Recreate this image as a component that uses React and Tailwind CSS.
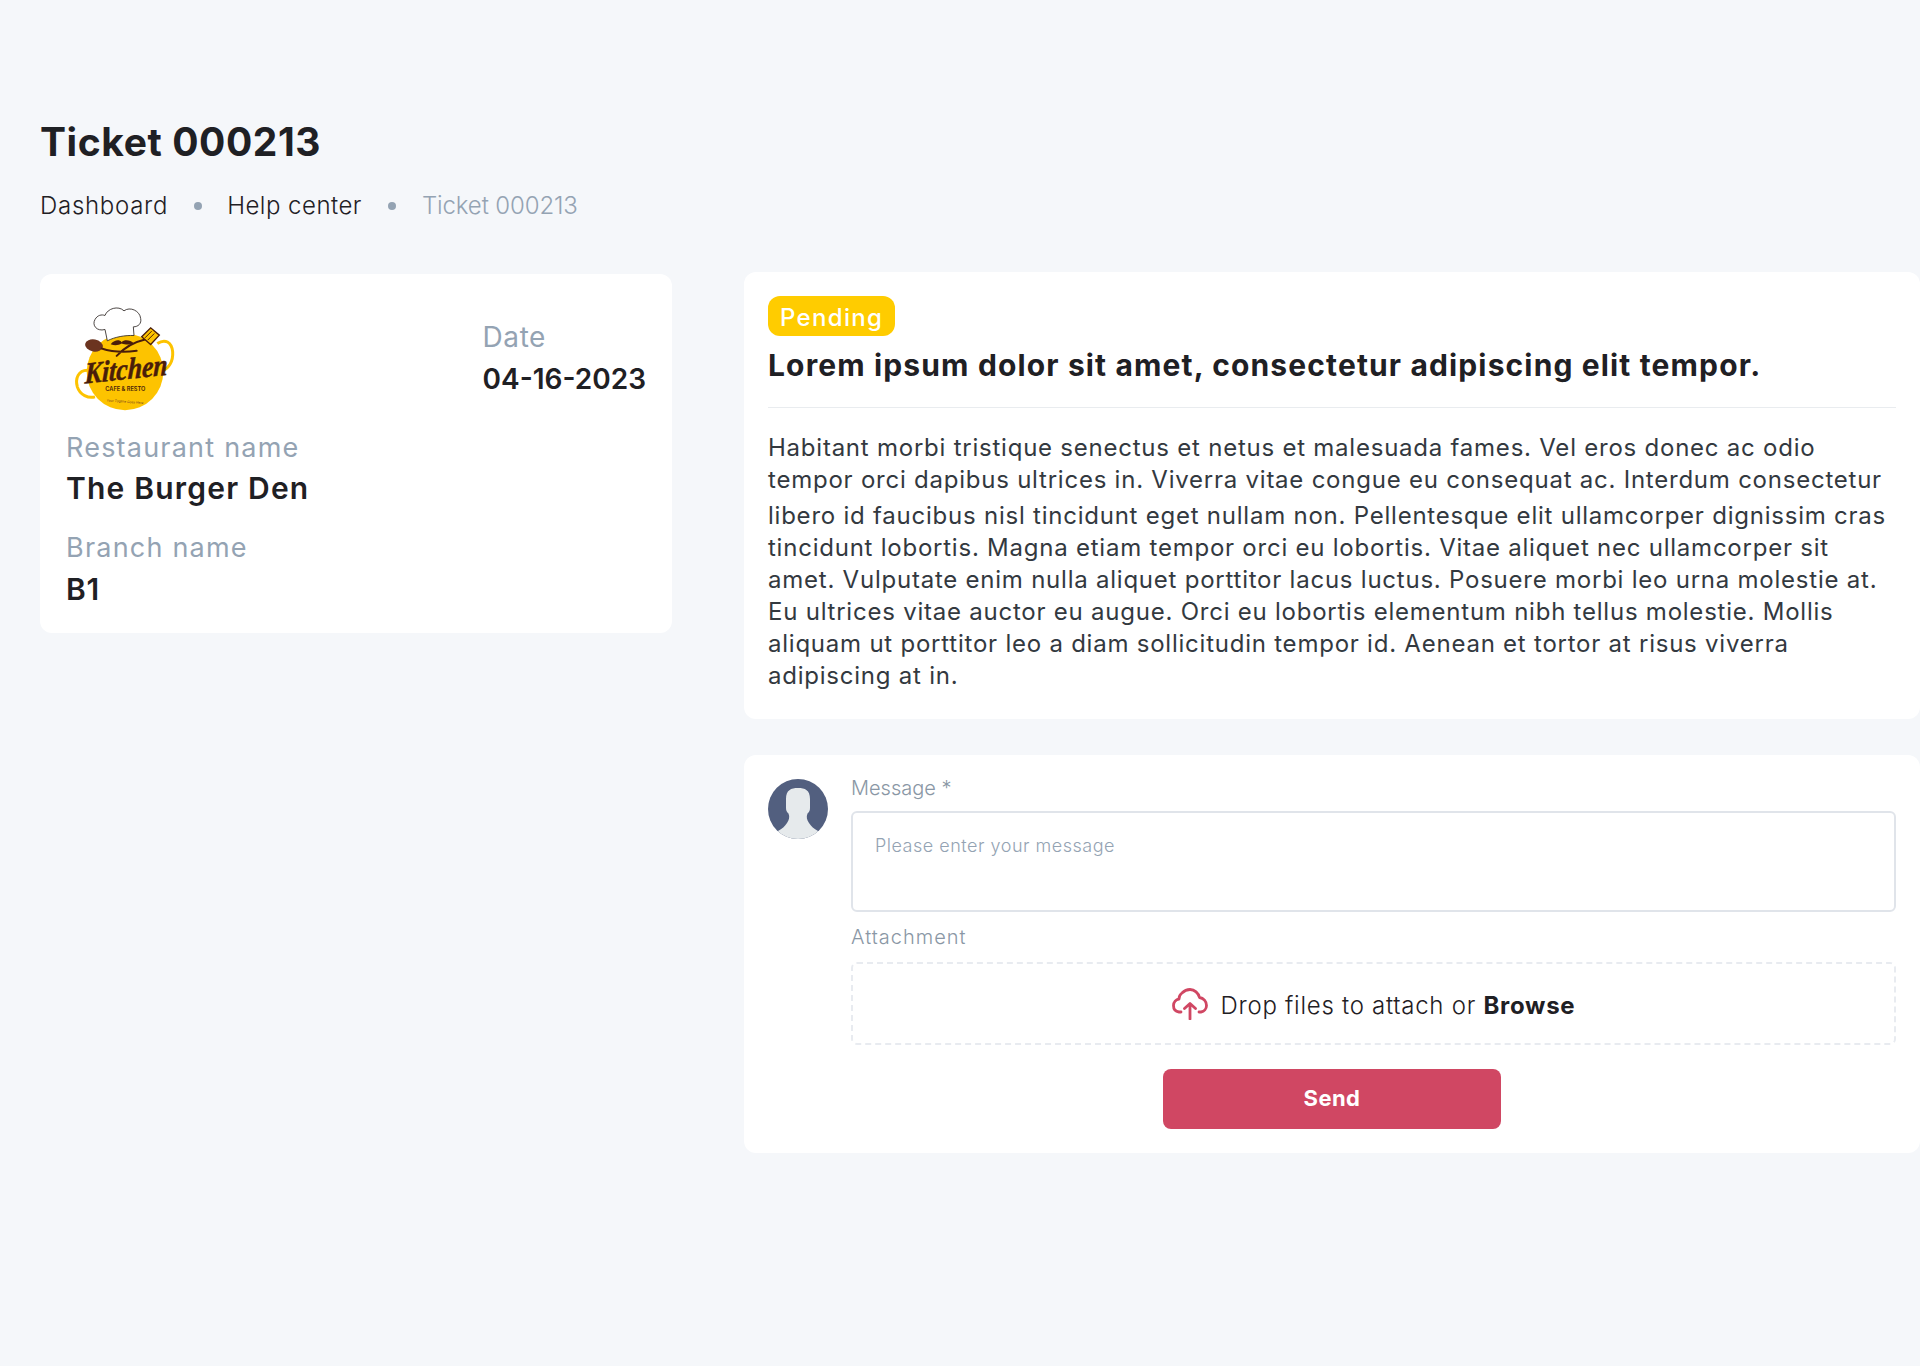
import React from 'react';

const LINES = [
  'Habitant morbi tristique senectus et netus et malesuada fames. Vel eros donec ac odio',
  'tempor orci dapibus ultrices in. Viverra vitae congue eu consequat ac. Interdum consectetur',
  'libero id faucibus nisl tincidunt eget nullam non. Pellentesque elit ullamcorper dignissim cras',
  'tincidunt lobortis. Magna etiam tempor orci eu lobortis. Vitae aliquet nec ullamcorper sit',
  'amet. Vulputate enim nulla aliquet porttitor lacus luctus. Posuere morbi leo urna molestie at.',
  'Eu ultrices vitae auctor eu augue. Orci eu lobortis elementum nibh tellus molestie. Mollis',
  'aliquam ut porttitor leo a diam sollicitudin tempor id. Aenean et tortor at risus viverra',
  'adipiscing at in.',
];

// Kitchen logo, coordinates follow the crop of the original
const KitchenLogo = () => (
  <svg viewBox="75 45 300 320" className="w-[100px] h-[107px] shrink-0 overflow-visible">
    <path d="M322 160 C345 145 365 155 368 185 C370 215 355 235 340 240" fill="none" stroke="#fdc300" strokeWidth="9" />
    <path d="M112 240 C85 240 75 265 82 290 C90 315 115 325 135 320" fill="none" stroke="#fdc300" strokeWidth="9" />
    <circle cx="225" cy="245" r="115" fill="#fdc300" />
    <path d="M165 118 C140 125 125 105 135 88 C142 75 155 72 165 76 C172 55 205 45 222 62 C240 48 270 62 272 85 C275 100 265 110 250 110 L252 136 C225 135 195 140 172 152 L165 118" fill="#fff" stroke="#2a2320" strokeWidth="2.5" />
    <path d="M182 162 C195 148 208 148 215 156 C222 148 240 148 252 160 C235 165 225 163 215 160 C205 165 195 167 182 162 Z" fill="#4a1d0a" />
    <ellipse cx="132" cy="166" rx="27" ry="18" fill="#6b3420" transform="rotate(10 132 166)" />
    <path d="M155 175 C185 185 215 188 260 182 M200 197 C225 170 255 155 285 148" fill="none" stroke="#4a1d0a" strokeWidth="6" strokeLinecap="round" />
    <path d="M275 140 L302 113 L328 135 L302 163 Z" fill="#fdc300" stroke="#4a1d0a" strokeWidth="4" />
    <path d="M285 143 L305 123 M293 150 L313 130" stroke="#4a1d0a" strokeWidth="3" />
    <text x="143" y="280" transform="rotate(-6 106 280) skewX(-8)" fontFamily="'Liberation Serif', serif" fontStyle="italic" fontWeight="700" fontSize="90" textLength="250" lengthAdjust="spacingAndGlyphs" fill="#4a1d0a" stroke="#4a1d0a" strokeWidth="1.5">Kitchen</text>
    <text x="226" y="302" textAnchor="middle" fontFamily="Inter, sans-serif" fontWeight="600" fontSize="17" fill="#4a1d0a">CAFE &amp; RESTO</text>
    <text x="225" y="338" textAnchor="middle" transform="rotate(4 225 338)" fontFamily="Inter, sans-serif" fontStyle="italic" fontSize="10" fill="#6b3420">Your Tagline Goes Here</text>
  </svg>
);

const Avatar = () => (
  <svg viewBox="0 0 60 60" className="w-[60px] h-[60px] shrink-0">
    <defs>
      <clipPath id="avatar-clip">
        <circle cx="30" cy="30" r="30" />
      </clipPath>
    </defs>
    <g clipPath="url(#avatar-clip)">
      <rect width="60" height="60" fill="#525f7f" />
      <path d="M18 20 C18 11 23 9 30 9 C37 9 42 11 42 20 L42 29 C42 32 41 33 39.5 34.5 C38 38 39 41 41 44 C43 47 46 50 50 52 L60 60 L0 60 L10 52 C14 50 17 47 19 44 C21 41 22 38 20.5 34.5 C19 33 18 32 18 29 Z" fill="#e6eaec" />
    </g>
  </svg>
);

const UploadCloud = () => (
  <svg viewBox="0 0 36 32" className="w-[36px] h-[32px] shrink-0" fill="none" stroke="#d04763" strokeWidth="2.8" strokeLinecap="round" strokeLinejoin="round">
    <path d="M9 24 L7 24 C3.5 23.5 1.5 21 1.5 17.5 C1.5 14 4 11.5 7 11 C7 9 8 6.5 10 5 C13 2 16 1.5 18 1.5 C22.5 1.5 26.5 5 27.5 9.5 C31.5 10 34.5 13.5 34.5 17.5 C34.5 21 32 23.5 29 24 L27 24" />
    <path d="M18 31 L18 16 M12.5 20.5 L18 15.5 L23.5 20.5" />
  </svg>
);

export default function App() {
  return (
    <div className="min-h-screen bg-[#f5f7fa] pt-[117px] font-['Inter',sans-serif] text-[#1f2024]">
      <div className="pl-10">
        <h1 className="text-[39px] leading-[50px] font-bold tracking-[0.015em]">Ticket 000213</h1>
        <div className="mt-[24px] flex items-center text-2xl leading-[30px] font-light">
          <span className="tracking-[0.03em]">Dashboard</span>
          <span className="mx-[26px] w-[8px] h-[8px] rounded-full bg-[#94a3b3]" />
          <span className="-ml-[1px] tracking-[0.02em]">Help center</span>
          <span className="mx-[26px] w-[8px] h-[8px] rounded-full bg-[#94a3b3]" />
          <span className="text-[#94a3b3] tracking-[-0.005em]">Ticket 000213</span>
        </div>
      </div>

      <div className="mt-[51px] flex items-start gap-[72px]">
        <div className="ml-10 mt-[2px] w-[632px] h-[359px] shrink-0 rounded-xl bg-white px-[26px] pt-[31px]">
          <div className="flex justify-between">
            <div className="ml-[9px]"><KitchenLogo /></div>
            <div className="pt-[15px]">
              <div className="text-[28px] leading-[34px] text-[#94a3b3] tracking-[0.02em]">Date</div>
              <div className="mt-[8px] text-[28px] leading-[34px] font-semibold">04-16-2023</div>
            </div>
          </div>
          <div className="mt-[19px] text-[27px] leading-[34px] text-[#94a3b3] tracking-[0.045em]">Restaurant name</div>
          <div className="mt-[6px] text-[30px] leading-[34px] font-semibold tracking-[0.04em]">The Burger Den</div>
          <div className="mt-[26px] text-[27px] leading-[34px] text-[#94a3b3] tracking-[0.045em]">Branch name</div>
          <div className="mt-[7px] text-[30px] leading-[34px] font-semibold tracking-[0.02em]">B1</div>
        </div>

        <div className="flex-1 flex flex-col gap-[36px]">
          <div className="h-[447px] rounded-xl bg-white px-6 pt-6">
            <span className="inline-block h-10 rounded-xl bg-[#ffcc00] px-3 text-2xl leading-[44px] font-medium text-white tracking-[0.055em]">Pending</span>
            <h2 className="mt-[9px] text-[30px] leading-[40px] font-bold tracking-[0.038em] whitespace-nowrap">Lorem ipsum dolor sit amet, consectetur adipiscing elit tempor.</h2>
            <div className="mt-[22px] h-px bg-[#e9ecef]" />
            <div className="mt-[24px] text-2xl leading-8 text-[#33393f] tracking-[0.032em]">
              {LINES.map((line, i) => (
                <div key={i} className={i === 2 ? 'mt-[4px] whitespace-nowrap' : 'whitespace-nowrap'}>{line}</div>
              ))}
            </div>
          </div>

          <div className="h-[398px] rounded-xl bg-white px-6 pt-6 flex gap-[23px]">
            <Avatar />
            <div className="flex-1 flex flex-col">
              <label className="-mt-[3px] text-xl leading-[24px] font-light text-[#8a97a5]">Message *</label>
              <div className="mt-[11px] h-[101px] rounded-md border-2 border-[#e0e4ea] px-[22px] pt-[20px] text-lg leading-[26px] font-light text-[#94a3b3] tracking-[0.028em]">Please enter your message</div>
              <label className="mt-[13px] text-xl leading-[24px] font-light text-[#8a97a5] tracking-[0.05em]">Attachment</label>
              <div className="mt-[13px] h-[83px] rounded-md border-2 border-dashed border-[#e8ebf0] flex items-center justify-center gap-[13px] text-2xl font-light tracking-[0.03em]">
                <UploadCloud />
                <span className="relative top-[2px]">Drop files to attach or <b className="font-bold">Browse</b></span>
              </div>
              <button className="mt-[24px] ml-[312px] w-[338px] h-[60px] pb-[2px] rounded-lg bg-[#d04763] text-[22px] font-bold text-white tracking-[0.02em]">Send</button>
            </div>
          </div>
        </div>
      </div>
    </div>
  );
}
